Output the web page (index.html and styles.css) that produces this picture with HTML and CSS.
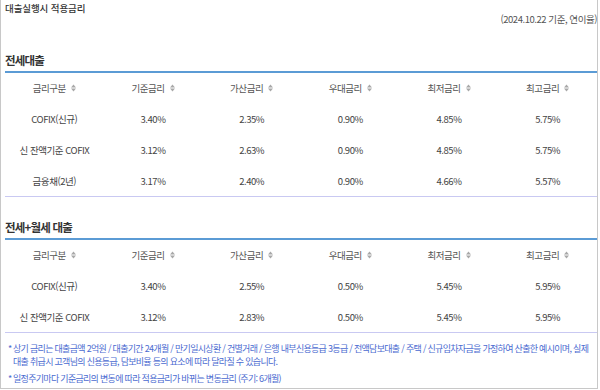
FILE: index.html
```html
<!DOCTYPE html>
<html lang="ko">
<head>
<meta charset="utf-8">
<title>대출실행시 적용금리</title>
<link rel="stylesheet" href="styles.css">
</head>
<body>
<div class="panel">
  <div class="title">대출실행시 적용금리</div>
  <div class="date">(2024.10.22 기준, 연이율)</div>

  <h2 class="sec sec1">전세대출</h2>
  <div class="table">
    <div class="th">금리구분 <svg class="sort" viewBox="0 0 5 8"><path d="M0 3.4L2.5 0.6L5 3.4Z M0 4.6L2.5 7.4L5 4.6Z"/></svg></div>
    <div class="th">기준금리 <svg class="sort" viewBox="0 0 5 8"><path d="M0 3.4L2.5 0.6L5 3.4Z M0 4.6L2.5 7.4L5 4.6Z"/></svg></div>
    <div class="th">가산금리 <svg class="sort" viewBox="0 0 5 8"><path d="M0 3.4L2.5 0.6L5 3.4Z M0 4.6L2.5 7.4L5 4.6Z"/></svg></div>
    <div class="th">우대금리 <svg class="sort" viewBox="0 0 5 8"><path d="M0 3.4L2.5 0.6L5 3.4Z M0 4.6L2.5 7.4L5 4.6Z"/></svg></div>
    <div class="th">최저금리 <svg class="sort" viewBox="0 0 5 8"><path d="M0 3.4L2.5 0.6L5 3.4Z M0 4.6L2.5 7.4L5 4.6Z"/></svg></div>
    <div class="th">최고금리 <svg class="sort" viewBox="0 0 5 8"><path d="M0 3.4L2.5 0.6L5 3.4Z M0 4.6L2.5 7.4L5 4.6Z"/></svg></div>

    <div class="td">COFIX(신규)</div><div class="td">3.40%</div><div class="td">2.35%</div><div class="td">0.90%</div><div class="td">4.85%</div><div class="td">5.75%</div>
    <div class="td">신 잔액기준 COFIX</div><div class="td">3.12%</div><div class="td">2.63%</div><div class="td">0.90%</div><div class="td">4.85%</div><div class="td">5.75%</div>
    <div class="td">금융채(2년)</div><div class="td">3.17%</div><div class="td">2.40%</div><div class="td">0.90%</div><div class="td">4.66%</div><div class="td">5.57%</div>
  </div>

  <h2 class="sec sec2">전세+월세 대출</h2>
  <div class="table">
    <div class="th">금리구분 <svg class="sort" viewBox="0 0 5 8"><path d="M0 3.4L2.5 0.6L5 3.4Z M0 4.6L2.5 7.4L5 4.6Z"/></svg></div>
    <div class="th">기준금리 <svg class="sort" viewBox="0 0 5 8"><path d="M0 3.4L2.5 0.6L5 3.4Z M0 4.6L2.5 7.4L5 4.6Z"/></svg></div>
    <div class="th">가산금리 <svg class="sort" viewBox="0 0 5 8"><path d="M0 3.4L2.5 0.6L5 3.4Z M0 4.6L2.5 7.4L5 4.6Z"/></svg></div>
    <div class="th">우대금리 <svg class="sort" viewBox="0 0 5 8"><path d="M0 3.4L2.5 0.6L5 3.4Z M0 4.6L2.5 7.4L5 4.6Z"/></svg></div>
    <div class="th">최저금리 <svg class="sort" viewBox="0 0 5 8"><path d="M0 3.4L2.5 0.6L5 3.4Z M0 4.6L2.5 7.4L5 4.6Z"/></svg></div>
    <div class="th">최고금리 <svg class="sort" viewBox="0 0 5 8"><path d="M0 3.4L2.5 0.6L5 3.4Z M0 4.6L2.5 7.4L5 4.6Z"/></svg></div>

    <div class="td">COFIX(신규)</div><div class="td">3.40%</div><div class="td">2.55%</div><div class="td">0.50%</div><div class="td">5.45%</div><div class="td">5.95%</div>
    <div class="td">신 잔액기준 COFIX</div><div class="td">3.12%</div><div class="td">2.83%</div><div class="td">0.50%</div><div class="td">5.45%</div><div class="td">5.95%</div>
  </div>

  <ul class="notes">
    <li>상기 금리는 대출금액 2억원 / 대출기간 24개월 / 만기일시상환 / 건별거래 / 은행 내부신용등급 3등급 / 전액담보대출 / 주택 / 신규임차자금을 가정하여 산출한 예시이며, 실제 대출 취급시 고객님의 신용등급, 담보비율 등의 요소에 따라 달라질 수 있습니다.</li>
    <li>일정주기마다 기준금리의 변동에 따라 적용금리가 바뀌는 변동금리 (주기: 6개월)</li>
  </ul>
</div>
</body>
</html>
```

FILE: styles.css
```css
* { box-sizing: border-box; }
html, body { margin: 0; padding: 0; background: #fff; }
body {
  font-family: "Noto Sans CJK KR", "Noto Sans", sans-serif;
  color: #444;
}
.panel {
  width: 598px;
  height: 389px;
  border: 1px solid #c8c8c8;
  border-top: none;
  padding: 0 0 0 4px;
}
.title {
  font-size: 9.5px;
  letter-spacing: -0.1px;
  line-height: 16px;
  color: #333;
  font-weight: 500;
}
.date {
  text-align: right;
  font-size: 9.5px;
  letter-spacing: -0.45px;
  line-height: 14px;
  margin-top: -4px;
  color: #555;
}
.sec {
  margin: 0;
  font-size: 11.5px;
  letter-spacing: -0.8px;
  font-weight: 700;
  color: #333;
  line-height: 16px;
  border-bottom: 2px solid #5b9bd5;
  padding-bottom: 3px;
}
.sec1 { margin-top: 26px; }
.sec2 { margin-top: 22px; }
.table {
  display: grid;
  grid-template-columns: repeat(6, 1fr);
  grid-auto-rows: 31px;
  grid-template-rows: 30px;
  border-bottom: 1px solid #c9c9f2;
}
.th, .td {
  display: flex;
  align-items: center;
  justify-content: center;
  font-size: 9.5px;
  letter-spacing: -0.45px;
  white-space: nowrap;
}
.th { color: #555; gap: 5px; }
.td { color: #444; }
.sort { width: 5px; height: 8px; fill: #a8a8a8; }
.notes {
  list-style: none;
  margin: 9px 0 0;
  padding: 0 2px 0 8px;
  font-size: 9px;
  letter-spacing: -0.7px;
  line-height: 13px;
  color: #4a6ad0;
}
.notes li { position: relative; margin-bottom: 4px; }
.notes li::before {
  content: "*";
  position: absolute;
  left: -5px;
  top: 0;
}
```
